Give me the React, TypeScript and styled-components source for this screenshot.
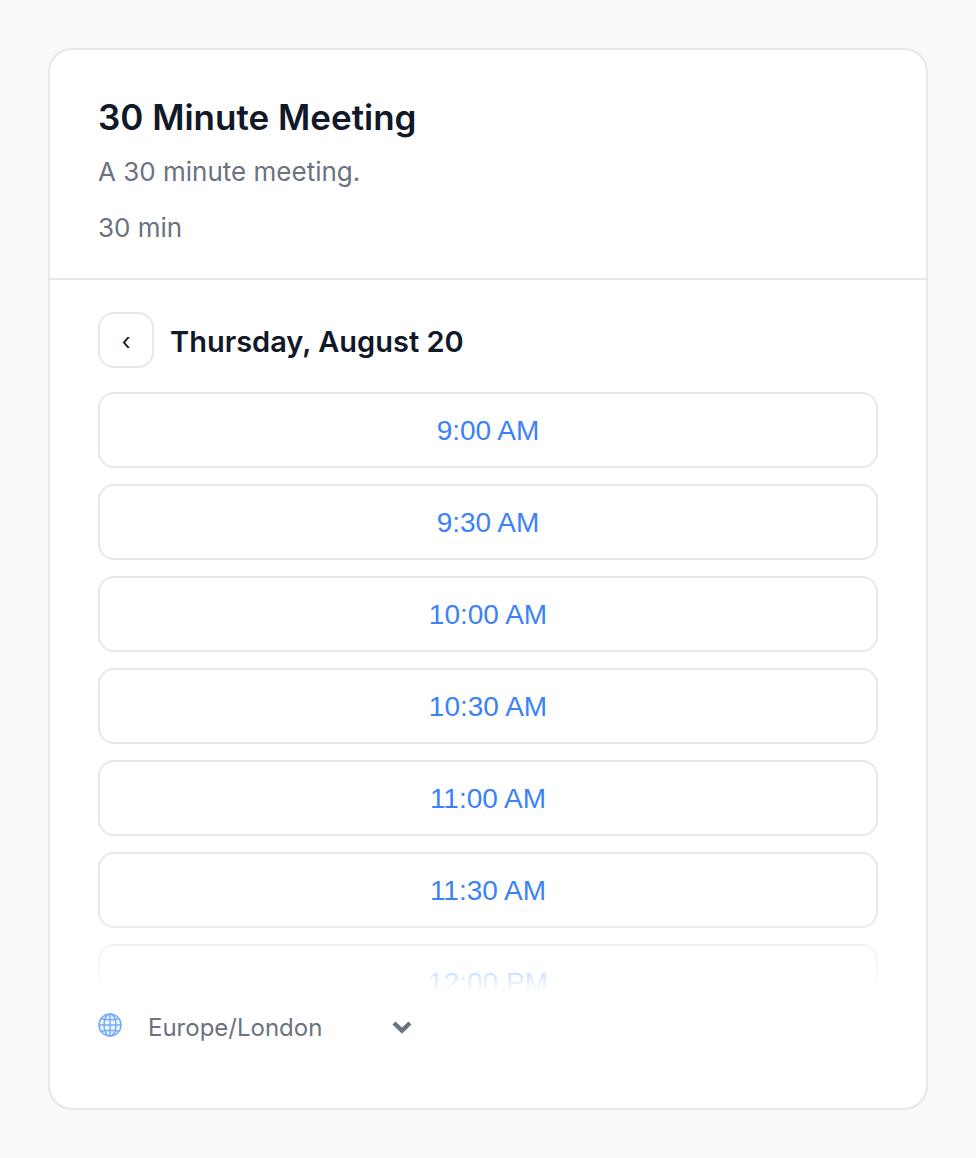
import React, { useState } from 'react';
import styled, { createGlobalStyle } from 'styled-components';

const GlobalStyle = createGlobalStyle`
  * { box-sizing: border-box; }
  body {
    margin: 0;
    background: #f9fafc;
    color: #111827;
    font-family: Inter, "Liberation Sans", sans-serif;
  }
`;

const Page = styled.main`
  padding: 48px;
`;

const Card = styled.section`
  background: #fff;
  border: 2px solid #e5e7eb;
  border-radius: 24px;
`;

const Header = styled.header`
  padding: 48px 48px 34px;
  border-bottom: 2px solid #e5e7eb;
`;

const Title = styled.h1`
  margin: 0;
  font-size: 35px;
  line-height: 38px;
  font-weight: 600;
`;

const Detail = styled.p<{ $gap: number }>`
  margin: ${({ $gap }) => $gap}px 0 0;
  color: #6b7280;
  font-size: 26px;
  line-height: 32px;
`;

const Body = styled.div`
  padding: 32px 48px 62px;
`;

const DayBar = styled.div`
  display: flex;
  align-items: center;
  gap: 16px;
`;

const BackButton = styled.button`
  width: 56px;
  height: 56px;
  padding: 4px 0 0;
  border: 2px solid #e5e7eb;
  border-radius: 16px;
  background: #fff;
  color: #111827;
  font: 24px/32px Inter, sans-serif;
  cursor: pointer;
`;

const Day = styled.h2`
  margin: 0;
  padding-top: 4px;
  font-size: 29px;
  line-height: 36px;
  font-weight: 600;
`;

const SlotArea = styled.div`
  position: relative;
  margin-top: 24px;
`;

const Slots = styled.div`
  display: flex;
  flex-direction: column;
  gap: 16px;
  max-height: 600px;
  overflow-y: auto;
  scrollbar-width: none;
`;

const Fade = styled.div`
  position: absolute;
  inset: auto 0 0;
  height: 80px;
  background: linear-gradient(to bottom, rgba(255, 255, 255, 0), #fff);
  pointer-events: none;
`;

const Slot = styled.button`
  flex: none;
  height: 76px;
  padding: 2px 0 0;
  border: 2px solid #e5e7eb;
  border-radius: 16px;
  background: #fff;
  color: #3b82f6;
  font: 28px/32px "Liberation Sans", Arial, sans-serif;
  cursor: pointer;
`;

const ZoneRow = styled.div`
  display: flex;
  align-items: center;
  gap: 26px;
  margin-top: 18px;
`;

const Globe = styled.svg`
  flex: none;
  width: 24px;
  height: 24px;
  margin-bottom: 6px;
`;

const ZoneField = styled.div`
  display: grid;
  align-items: center;
  width: 264px;
`;

const ZoneSelect = styled.select`
  grid-area: 1 / 1;
  appearance: none;
  width: 100%;
  padding: 0 32px 0 0;
  border: 0;
  background: transparent;
  color: #6b7280;
  font: 24px/36px Inter, sans-serif;
  cursor: pointer;
`;

const Chevron = styled.svg`
  grid-area: 1 / 1;
  justify-self: end;
  width: 20px;
  height: 14px;
  pointer-events: none;
`;

const times = [
  '9:00 AM', '9:30 AM', '10:00 AM', '10:30 AM', '11:00 AM', '11:30 AM',
  '12:00 PM',
];

export default function App() {
  const [zone, setZone] = useState('Europe/London');
  return (
    <Page>
      <GlobalStyle />
      <Card>
        <Header>
          <Title>30 Minute Meeting</Title>
          <Detail $gap={20}>A 30 minute meeting.</Detail>
          <Detail $gap={24}>30 min</Detail>
        </Header>
        <Body>
          <DayBar>
            <BackButton type="button" aria-label="Back to calendar">‹</BackButton>
            <Day>Thursday, August 20</Day>
          </DayBar>
          <SlotArea>
            <Slots>
              {times.map((time) => (
                <Slot type="button" key={time}>{time}</Slot>
              ))}
            </Slots>
            <Fade />
          </SlotArea>
          <ZoneRow>
            <Globe viewBox="0 0 24 24" fill="none" stroke="#74abf6" strokeWidth="1.5" aria-hidden="true">
              <circle cx="12" cy="12" r="11" fill="#eef5ff" />
              <ellipse cx="12" cy="12" rx="6" ry="11" />
              <path d="M12 1v22M1 12h22M3.4 5.5Q12 8 20.6 5.5M3.4 18.5Q12 16 20.6 18.5" />
            </Globe>
            <ZoneField>
              <ZoneSelect aria-label="Time zone" value={zone} onChange={(e) => setZone(e.target.value)}>
                <option>Europe/London</option>
                <option>Europe/Paris</option>
                <option>America/New_York</option>
              </ZoneSelect>
              <Chevron viewBox="0 0 20 14" fill="none" stroke="#6b7280" strokeWidth="4.4" aria-hidden="true">
                <path d="M2 2l8 7.6L18 2" />
              </Chevron>
            </ZoneField>
          </ZoneRow>
        </Body>
      </Card>
    </Page>
  );
}
